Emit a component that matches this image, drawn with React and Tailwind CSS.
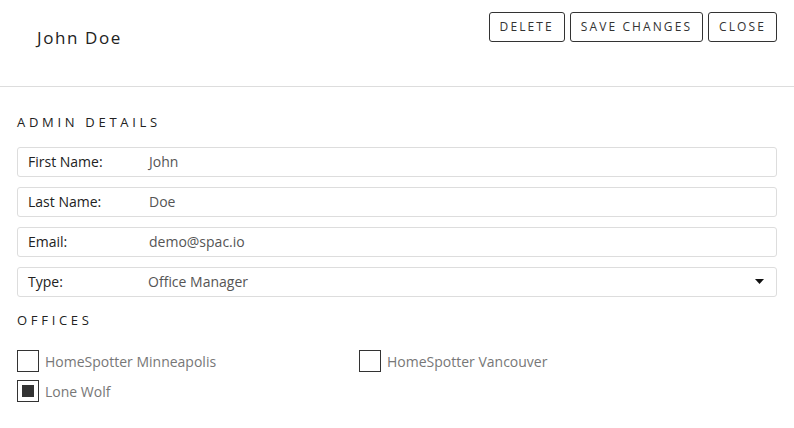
import React from "react";

const fields = [
	{ label: "First Name:", value: "John" },
	{ label: "Last Name:", value: "Doe" },
	{ label: "Email:", value: "demo@spac.io" },
];

const offices = [
	{ name: "HomeSpotter Minneapolis", checked: false },
	{ name: "HomeSpotter Vancouver", checked: false },
	{ name: "Lone Wolf", checked: true },
];

function HeaderButton({ children }) {
	return (
		<button className="h-[30px] px-[10px] border border-[#333] rounded-[3px] text-[12px] tracking-[2.1px] text-[#333] bg-white leading-none">
			{children}
		</button>
	);
}

function Field({ label, value }) {
	return (
		<div className="flex items-center h-[30px] border border-[#ddd] rounded-[3px] text-[14px]">
			<div className="w-[131px] pl-[10px] text-[#222] font-medium">{label}</div>
			<div className="text-[#555]">{value}</div>
		</div>
	);
}

export default function App() {
	return (
		<div className="w-[794px] h-[428px] bg-white font-['Open_Sans',sans-serif] overflow-hidden">
			<div className="h-[87px] border-b border-[#ddd] flex items-start justify-between pl-[37px] pr-[17px]">
				<h1 className="mt-[25px] text-[17px] tracking-[1.6px] text-[#222]">
					John Doe
				</h1>
				<div className="flex gap-[5px] mt-[12px]">
					<HeaderButton>DELETE</HeaderButton>
					<HeaderButton>SAVE CHANGES</HeaderButton>
					<HeaderButton>CLOSE</HeaderButton>
				</div>
			</div>

			<div className="px-[17px]">
				<h2 className="mt-[26px] mb-[14px] text-[13px] tracking-[3.7px] text-[#222]">
					ADMIN DETAILS
				</h2>
				<div className="flex flex-col gap-[10px]">
					{fields.map((f) => (
						<Field key={f.label} label={f.label} value={f.value} />
					))}
					<div className="flex items-center h-[30px] border border-[#ddd] rounded-[3px] text-[14px]">
						<div className="w-[130px] pl-[10px] text-[#222] font-medium">Type:</div>
						<div className="flex-1 text-[#555]">Office Manager</div>
						<svg width="9" height="5" viewBox="0 0 9 5" className="mr-[12px]">
							<path d="M0 0h9L4.5 5z" fill="#111" />
						</svg>
					</div>
				</div>

				<h2 className="mt-[14px] mb-[20px] text-[13px] tracking-[3.7px] text-[#222]">
					OFFICES
				</h2>
				<div className="flex flex-wrap gap-y-[8px]">
					{offices.map((o) => (
						<label key={o.name} className="w-[342px] flex items-center gap-[6px]">
							<span className="w-[22px] h-[22px] border border-[#333] flex items-center justify-center">
								{o.checked && <span className="w-[12px] h-[12px] bg-[#333]" />}
							</span>
							<span className="text-[14px] text-[#777]">{o.name}</span>
						</label>
					))}
				</div>
			</div>
		</div>
	);
}
